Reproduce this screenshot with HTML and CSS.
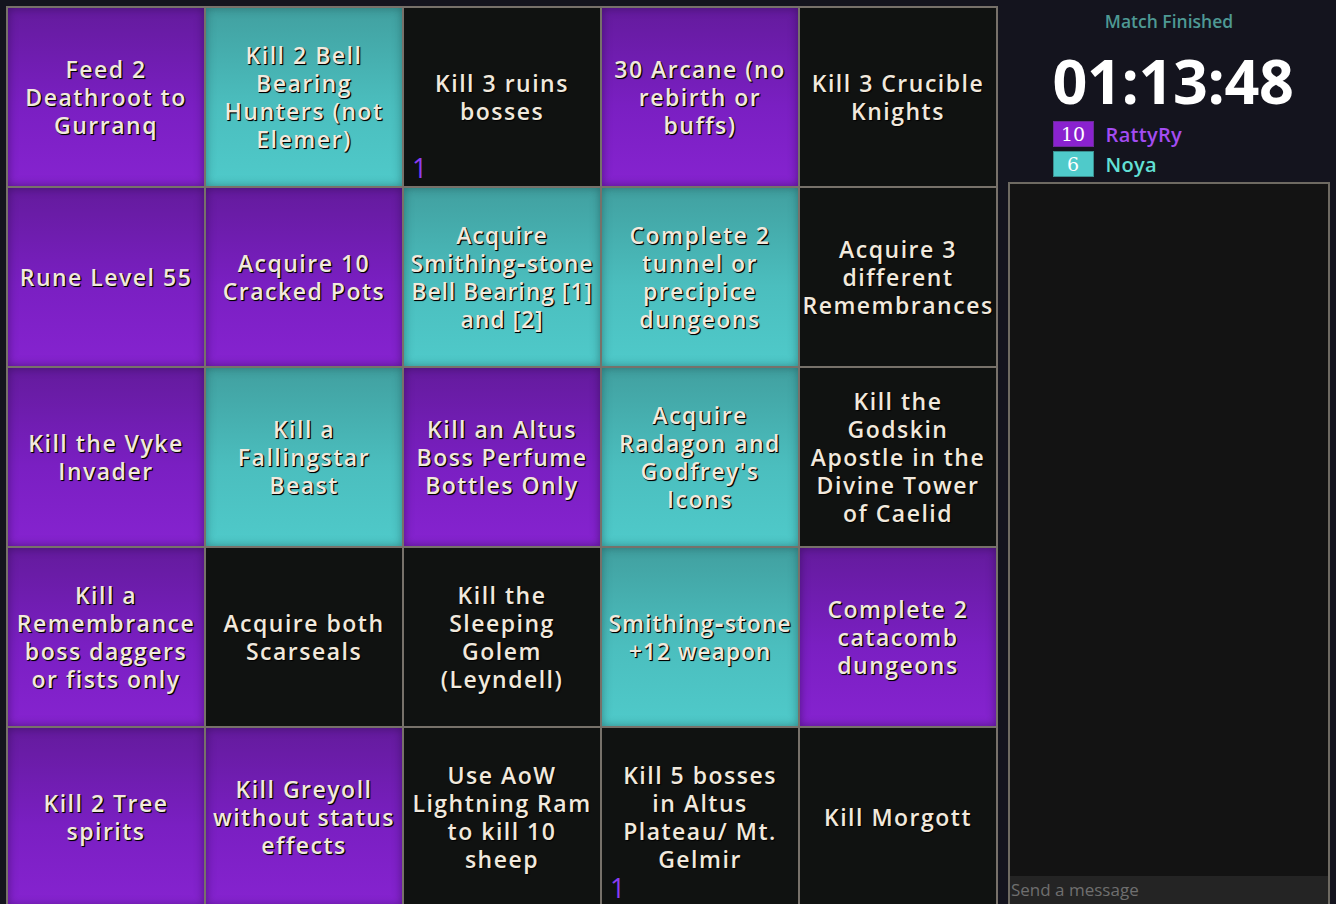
FILE: index.html
```html
<!DOCTYPE html>
<html>
<head>
<meta charset="utf-8">
<link rel="stylesheet" href="styles.css">
</head>
<body>
<div class="page">
  <div class="board">
    <div class="cell p"><span>Feed 2 Deathroot to Gurranq</span></div>
    <div class="cell t"><span>Kill 2 Bell Bearing Hunters (not Elemer)</span></div>
    <div class="cell b"><span>Kill 3 ruins bosses</span><i class="mark">1</i></div>
    <div class="cell p"><span>30 Arcane (no rebirth or buffs)</span></div>
    <div class="cell b"><span>Kill 3 Crucible Knights</span></div>

    <div class="cell p"><span>Rune Level 55</span></div>
    <div class="cell p"><span>Acquire 10 Cracked Pots</span></div>
    <div class="cell t tight"><span>Acquire Smithing&#8209;stone Bell Bearing [1] and [2]</span></div>
    <div class="cell t"><span>Complete 2 tunnel or precipice dungeons</span></div>
    <div class="cell b"><span>Acquire 3 different Remembrances</span></div>

    <div class="cell p"><span>Kill the Vyke Invader</span></div>
    <div class="cell t"><span>Kill a Fallingstar Beast</span></div>
    <div class="cell p"><span>Kill an Altus Boss Perfume Bottles Only</span></div>
    <div class="cell t"><span>Acquire Radagon and Godfrey's Icons</span></div>
    <div class="cell b"><span>Kill the Godskin Apostle in the Divine Tower of Caelid</span></div>

    <div class="cell p"><span>Kill a Remembrance boss daggers or fists only</span></div>
    <div class="cell b"><span>Acquire both Scarseals</span></div>
    <div class="cell b"><span>Kill the Sleeping Golem (Leyndell)</span></div>
    <div class="cell t tight"><span>Smithing&#8209;stone +12 weapon</span></div>
    <div class="cell p"><span>Complete 2 catacomb dungeons</span></div>

    <div class="cell p"><span>Kill 2 Tree spirits</span></div>
    <div class="cell p"><span>Kill Greyoll without status effects</span></div>
    <div class="cell b"><span>Use AoW Lightning Ram to kill 10 sheep</span></div>
    <div class="cell b"><span>Kill 5 bosses in Altus Plateau/ Mt. Gelmir</span><i class="mark">1</i></div>
    <div class="cell b"><span>Kill Morgott</span></div>
  </div>

  <div class="side">
    <div class="status">Match Finished</div>
    <div class="clockwrap">
      <div class="clock">01:13:48</div>
      <div class="score">
        <span class="count purple">10</span><span class="name purple-name">RattyRy</span>
      </div>
      <div class="score">
        <span class="count teal">6</span><span class="name teal-name">Noya</span>
      </div>
    </div>
    <div class="chat">
      <div class="log"></div>
      <div class="input">Send a message</div>
    </div>
  </div>
</div>
</body>
</html>
```

FILE: styles.css
```css
html, body {
  margin: 0;
  padding: 0;
  background: #14141e;
  height: 904px;
  overflow: hidden;
}

.page {
  display: flex;
  align-items: flex-start;
  padding: 6px 0 0 6px;
}

.board {
  display: grid;
  grid-template-columns: repeat(5, 196px);
  grid-auto-rows: 178px;
  gap: 2px;
  background: #77716a;
  border: 2px solid #77716a;
  flex: none;
}

.cell {
  position: relative;
  display: flex;
  align-items: center;
  justify-content: center;
  text-align: center;
  padding: 0 6px;
  font-family: "Open Sans", "DejaVu Sans", sans-serif;
  font-size: 23px;
  font-weight: 600;
  letter-spacing: 1.5px;
  line-height: 28px;
  color: #f1e9dd;
  text-shadow: 1px 1px 1px #000, 1px 1px 0 #111;
}

.cell.tight {
  padding: 0 4px;
  letter-spacing: 0.9px;
}

.cell.b {
  background: #101211;
}

.cell.p {
  background: linear-gradient(180deg, #641b9d 0%, #7a1fc2 55%, #8623d0 100%);
  box-shadow: inset 0 0 10px rgba(40, 10, 70, 0.55);
}

.cell.t {
  background: linear-gradient(180deg, #41a0a0 0%, #4bbebe 55%, #4fcaca 100%);
  box-shadow: inset 0 0 10px rgba(20, 70, 70, 0.5);
}

.mark {
  position: absolute;
  left: 8px;
  bottom: 4px;
  font-style: normal;
  font-family: "Open Sans", sans-serif;
  font-weight: 400;
  font-size: 27px;
  line-height: 28px;
  letter-spacing: 0;
  color: #8a3cf2;
  text-shadow: none;
}

.side {
  width: 332px;
  display: flex;
  flex-direction: column;
  align-items: center;
  padding: 0 0 0 5px;
}

.status {
  margin-top: 3px;
  font-family: "Open Sans", sans-serif;
  font-weight: 600;
  font-size: 17.5px;
  line-height: 24px;
  color: #4e9994;
}

.clockwrap {
  display: flex;
  flex-direction: column;
  align-items: flex-start;
  margin-left: 8px;
}

.clock {
  font-family: "Open Sans", sans-serif;
  font-weight: 700;
  font-size: 61px;
  line-height: 70px;
  margin-top: 13px;
  color: #ffffff;
  letter-spacing: -0.4px;
}

.score {
  display: flex;
  align-items: center;
  height: 24px;
  margin-top: 6px;
}

.score:first-of-type {
  margin-top: 8px;
}

.count {
  box-sizing: border-box;
  width: 41px;
  height: 26px;
  display: flex;
  align-items: center;
  justify-content: center;
  font-family: "DejaVu Serif", serif;
  font-size: 19px;
  color: #fff;
  border: 1px solid;
}

.count.purple {
  background: #8a22cf;
  border-color: #6b2a9a;
}

.count.teal {
  background: #4fcaca;
  border-color: #3a8f8f;
}

.name {
  margin-left: 12px;
  font-family: "Open Sans", sans-serif;
  font-weight: 600;
  font-size: 20px;
  letter-spacing: 0.3px;
}

.purple-name { color: #a44cf2; }
.teal-name { color: #62e0d6; }

.chat {
  margin-top: 6px;
  width: 322px;
  height: 724px;
  box-sizing: border-box;
  border: 2px solid #6e6a62;
  border-bottom: none;
  background: #131313;
  display: flex;
  flex-direction: column;
}

.log {
  flex: 1;
}

.input {
  height: 30px;
  background: #242424;
  font-family: "Open Sans", sans-serif;
  font-size: 17px;
  line-height: 28px;
  color: #6f6f6f;
  padding-left: 1px;
}
```
